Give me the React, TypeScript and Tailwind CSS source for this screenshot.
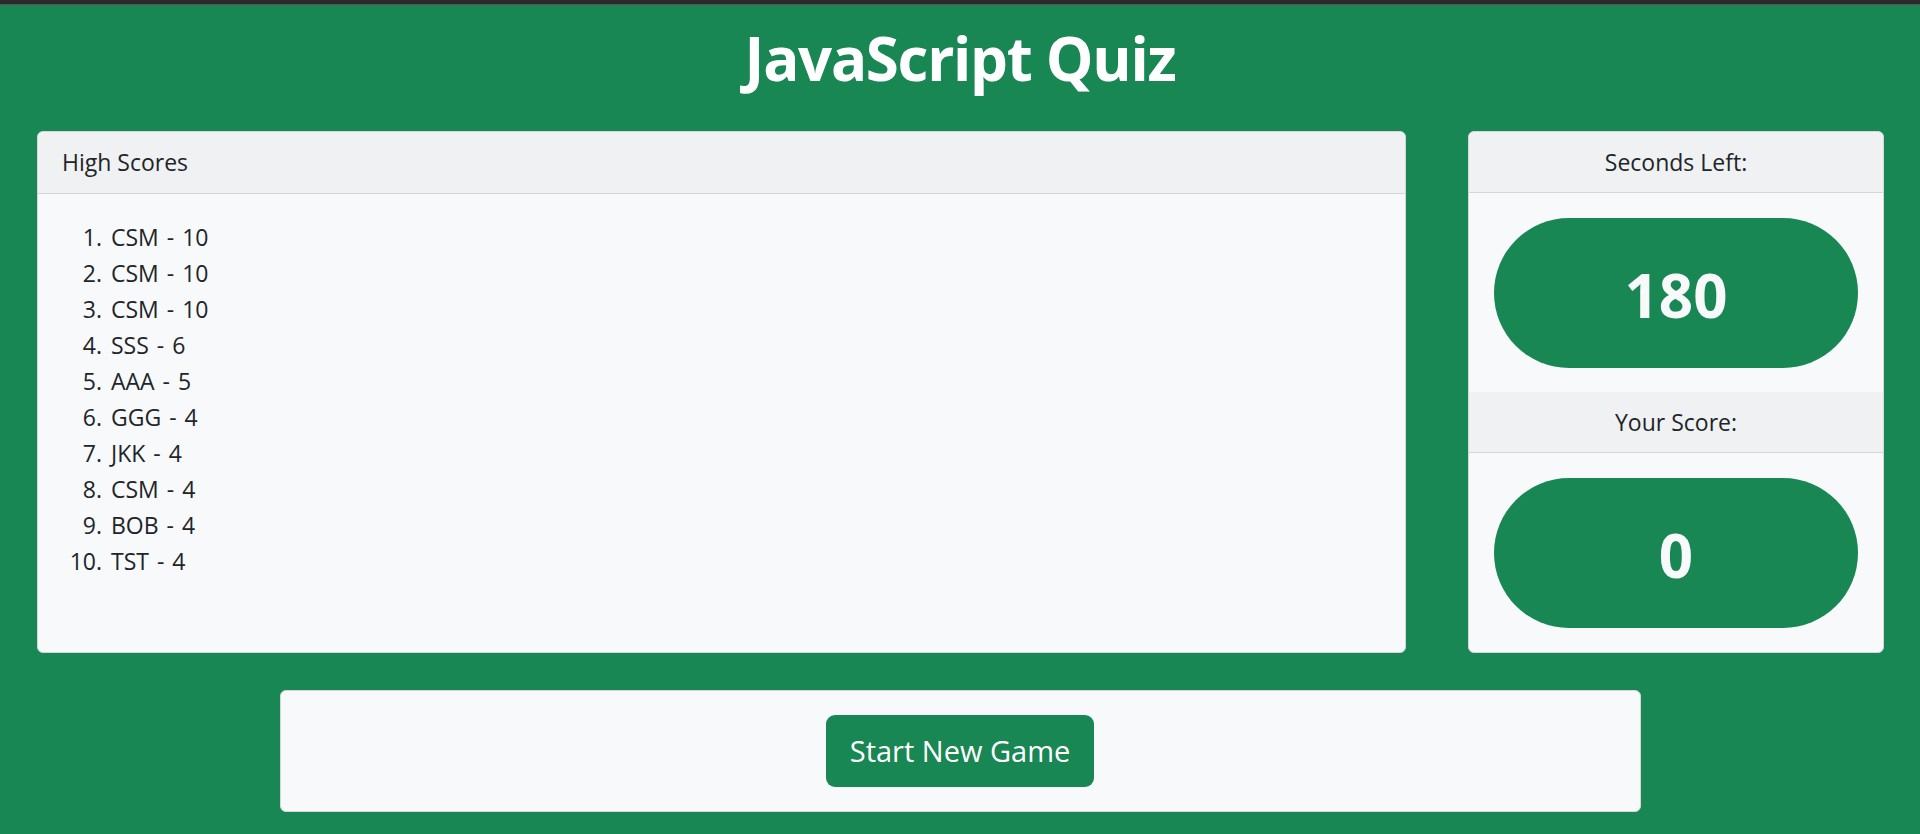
const scores = [
  { name: "CSM", score: 10 },
  { name: "CSM", score: 10 },
  { name: "CSM", score: 10 },
  { name: "SSS", score: 6 },
  { name: "AAA", score: 5 },
  { name: "GGG", score: 4 },
  { name: "JKK", score: 4 },
  { name: "CSM", score: 4 },
  { name: "BOB", score: 4 },
  { name: "TST", score: 4 },
];

function StatPanel({ label, value }: { label: string; value: number }) {
  return (
    <>
      <div className="h-[61px] flex items-center justify-center bg-[#f0f1f2] border-b border-[#d5d6d7] text-[23px]">
        {label}
      </div>
      <div className="p-[25px] pb-[24px]">
        <div className="h-[150px] rounded-full bg-[#198754] flex items-center justify-center text-[#f8f9fa] text-[60px] font-bold leading-none pt-[4px]">
          {value}
        </div>
      </div>
    </>
  );
}

export default function App() {
  return (
    <div
      className="min-h-[834px] bg-[#198754] text-[#212529]"
      style={{ fontFamily: '"Open Sans", "Noto Sans", sans-serif' }}
    >
      <div className="h-[4px] bg-[#2b2b2b]" />
      <div className="h-px bg-[#555]" />

      <h1 className="text-center text-white text-[60px] font-bold leading-none pt-[23px] h-[126px] tracking-[-1.3px]">
        JavaScript Quiz
      </h1>

      <div className="flex gap-[62px] pl-[37px] pr-[36px]">
        <section className="flex-1 bg-[#f8f9fa] rounded-[6px] border border-[#d5d6d7] overflow-hidden">
          <div className="h-[62px] flex items-center px-[24px] bg-[#f0f1f2] border-b border-[#d5d6d7] text-[23px]">
            High Scores
          </div>
          <ol className="list-decimal pl-[72px] pt-[25px] text-[23px] leading-[36px]">
            {scores.map((s, i) => (
              <li key={i} className="pl-[1px] [word-spacing:2px]">
                {s.name} - {s.score}
              </li>
            ))}
          </ol>
        </section>

        <aside className="w-[416px] bg-[#f8f9fa] rounded-[6px] border border-[#d5d6d7] overflow-hidden">
          <StatPanel label="Seconds Left:" value={180} />
          <StatPanel label="Your Score:" value={0} />
        </aside>
      </div>

      <div className="w-[1361px] mx-auto mt-[37px] bg-[#f8f9fa] rounded-[6px] border border-[#d5d6d7] p-[24px] flex justify-center">
        <button className="h-[72px] px-[24px] rounded-[9px] bg-[#198754] text-white text-[29px]">
          Start New Game
        </button>
      </div>
    </div>
  );
}
